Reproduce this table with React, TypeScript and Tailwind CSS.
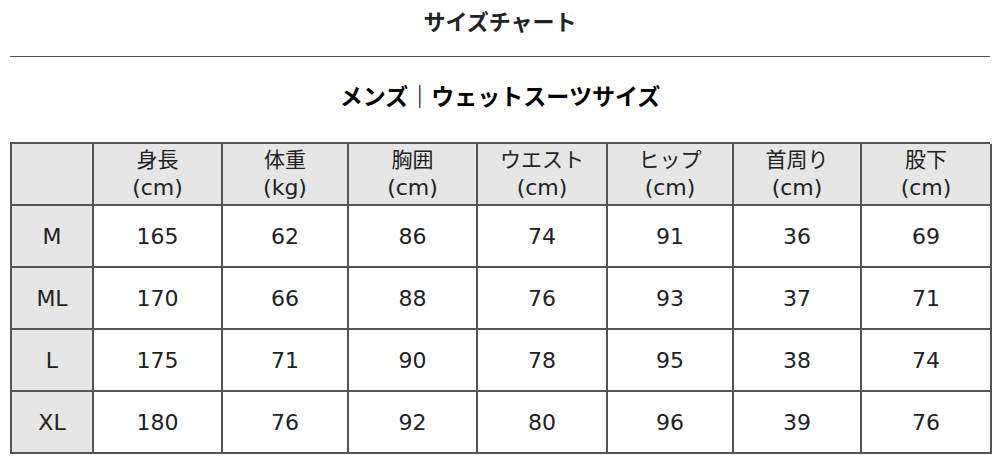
const columns = [
  { label: "身長", unit: "(cm)" },
  { label: "体重", unit: "(kg)" },
  { label: "胸囲", unit: "(cm)" },
  { label: "ウエスト", unit: "(cm)" },
  { label: "ヒップ", unit: "(cm)" },
  { label: "首周り", unit: "(cm)" },
  { label: "股下", unit: "(cm)" },
];

const rows = [
  { size: "M", values: [165, 62, 86, 74, 91, 36, 69] },
  { size: "ML", values: [170, 66, 88, 76, 93, 37, 71] },
  { size: "L", values: [175, 71, 90, 78, 95, 38, 74] },
  { size: "XL", values: [180, 76, 92, 80, 96, 39, 76] },
];

export default function App() {
  return (
    <div
      className="w-[1000px] h-[462px] bg-white px-[10px] text-[#222]"
      style={{ fontFamily: '"DejaVu Sans", "Noto Sans CJK JP", sans-serif' }}
    >
      {/* タイトル */}
      <div className="h-[57px] pt-[5px] text-center text-[22px] leading-[30px] font-bold border-b border-[#555] [font-family:'Noto_Sans_CJK_JP',sans-serif]">
        サイズチャート
      </div>

      {/* サブタイトル */}
      <h2 className="h-[85px] pt-[22px] text-center text-[23px] leading-[32px] font-bold text-black [font-family:'Noto_Sans_CJK_JP',sans-serif]">
        メンズ｜ウェットスーツサイズ
      </h2>

      {/* サイズ表 */}
      <div className="grid grid-cols-[82px_129px_126px_129px_130px_126px_128px_130px] border-l-2 border-t-2 border-[#555] text-[22px]">
        <div className="h-[62px] bg-[#e6e6e6] border-r-2 border-b-2 border-[#555]" />
        {columns.map((c) => (
          <div
            key={c.label}
            className="h-[62px] bg-[#e6e6e6] border-r-2 border-b-2 border-[#555] flex flex-col items-center justify-center leading-[28px]"
          >
            <span className="text-[21px]">{c.label}</span>
            <span>{c.unit}</span>
          </div>
        ))}
        {rows.map((r) => (
          <div key={r.size} className="contents">
            <div className="h-[62px] bg-[#e6e6e6] border-r-2 border-b-2 border-[#555] flex items-center justify-center">
              {r.size}
            </div>
            {r.values.map((v, i) => (
              <div
                key={i}
                className="h-[62px] border-r-2 border-b-2 border-[#555] flex items-center justify-center"
              >
                {v}
              </div>
            ))}
          </div>
        ))}
      </div>
    </div>
  );
}
